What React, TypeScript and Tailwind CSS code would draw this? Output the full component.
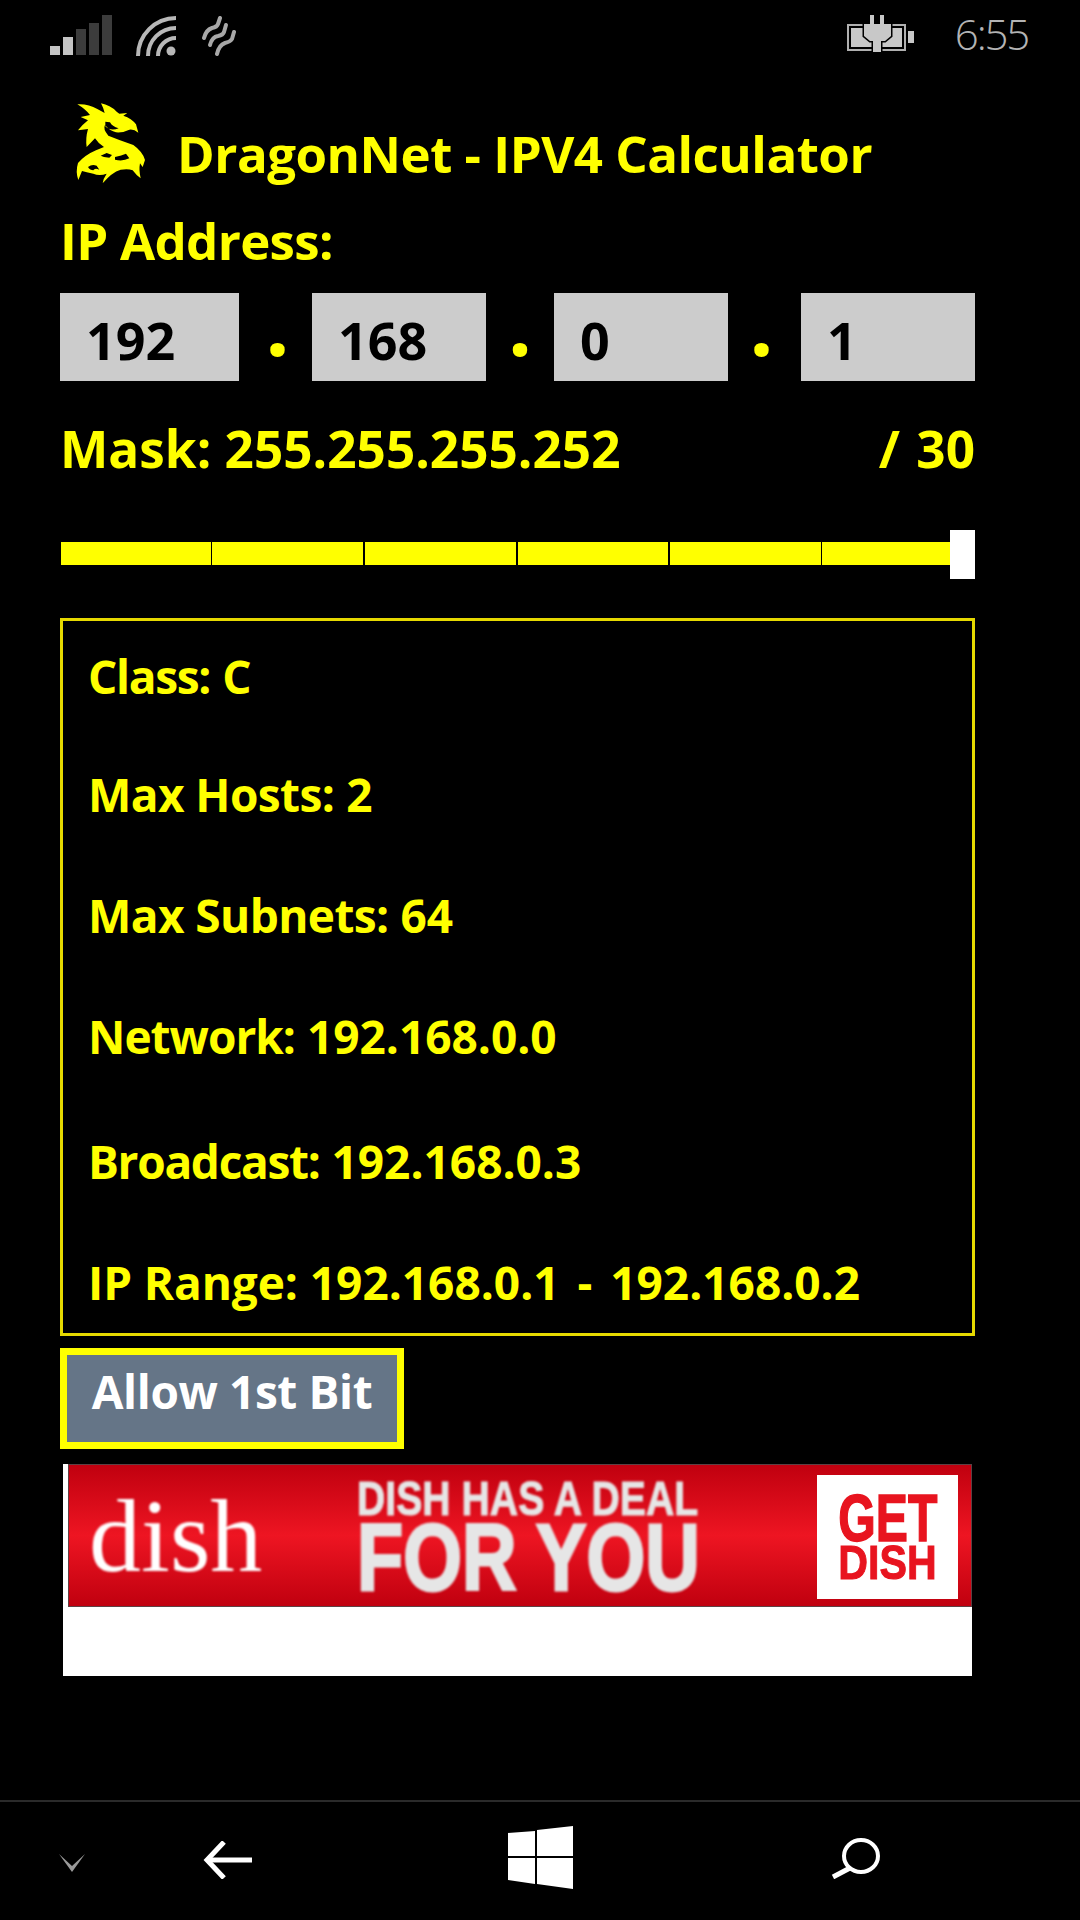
import React from 'react';

const font = { fontFamily: '"Open Sans", "Noto Sans", sans-serif' };
const banner = { fontFamily: '"Liberation Sans", Arial, sans-serif' };

function StatusBar() {
  return (
    <div className="flex h-[72px] items-start justify-between pl-[50px] pr-[52px] pt-[15px]">
      <div className="flex items-start">
        {/* signal bars */}
        <svg width="62" height="40" viewBox="0 0 62 40">
          <rect x="0" y="31" width="10" height="9" fill="#c4c4c4" />
          <rect x="13" y="22" width="10" height="18" fill="#c4c4c4" />
          <rect x="26" y="14" width="10" height="26" fill="#3c3c3c" />
          <rect x="39" y="8" width="10" height="32" fill="#3c3c3c" />
          <rect x="52" y="0" width="10" height="40" fill="#3c3c3c" />
        </svg>
        {/* wifi */}
        <svg width="40" height="40" viewBox="0 0 40 40" fill="none" stroke="#b8b8b8" strokeWidth="4" className="ml-[24px] mt-px">
          <path d="M2 40 A38 38 0 0 1 40 2" />
          <path d="M12 40 A28 28 0 0 1 40 12" />
          <path d="M22 40 A18 18 0 0 1 40 22" />
          <circle cx="35" cy="35" r="4.5" fill="#b8b8b8" stroke="none" />
        </svg>
        {/* data sense */}
        <svg width="34" height="40" viewBox="0 0 34 40" fill="none" stroke="#a8a8a8" strokeWidth="4" strokeLinecap="round" className="ml-[26px] mt-px">
          <path d="M18 2 L16 8 Q15 11 10 12 Q4 14 2 22" />
          <path d="M24 9 L22 16 Q21 19 16 20 Q10 21 8 29" />
          <path d="M32 16 L30 23 Q28 26 23 27 Q17 29 15 38" />
        </svg>
      </div>
      <div className="flex items-start">
        {/* battery, charging */}
        <svg width="67" height="37" viewBox="0 0 67 37">
          <rect x="1" y="10" width="57" height="25" fill="none" stroke="#b0b0b0" strokeWidth="2" />
          <rect x="4" y="13" width="51" height="19" fill="#c8c8c8" />
          <rect x="61" y="16" width="6" height="12" fill="#c8c8c8" />
          <path
            d="M23 0 H27 V9 H33 V0 H37 V9 H44 V21 L38 26 H34 V37 H26 V26 H23 L17 21 V9 H23 Z"
            fill="#c8c8c8"
            stroke="#000"
            strokeWidth="3"
            style={{ paintOrder: 'stroke' }}
          />
        </svg>
        <span className="ml-[41px] mt-[-9px] text-[42px] font-light leading-[56px] tracking-[-2.2px] text-[#b4b4b4]">6:55</span>
      </div>
    </div>
  );
}

function DragonLogo() {
  return (
    <svg width="100" height="95" viewBox="0 0 300 285" className="mt-[23px] shrink-0">
      <path
        fill="#ffff00"
        fillRule="evenodd"
        d="M52 28 Q85 26 112 42 L134 54 Q130 38 123 25 Q150 30 170 50 L178 56 L202 54 L190 62 Q215 70 228 88 L235 113 Q222 102 208 104 Q188 114 168 112 Q150 108 135 90 Q128 102 145 122 Q180 136 220 150 Q248 170 255 195 L248 216 L240 205 Q236 225 242 250 Q228 240 218 226 Q205 220 182 224 Q155 232 128 265 Q130 250 140 236 Q118 244 100 236 Q78 232 66 228 L55 255 Q46 230 54 204 Q75 180 108 166 L132 156 Q115 146 105 130 L80 156 Q76 130 84 102 L54 106 Q66 90 84 76 L62 66 L90 60 Q76 42 52 28 Z M136 80 L150 82 Q156 94 176 100 Q152 110 136 94 Z M84 216 Q96 206 110 212 L118 224 Q104 218 100 226 Q90 226 84 216 Z M122 182 L140 174 L156 180 L148 188 L132 186 Z M165 186 Q185 182 198 176 L208 190 Q188 200 165 194 Z"
      />
    </svg>
  );
}

function Octet({ value, width }: { value: string; width: string }) {
  return (
    <div className={`${width} flex h-[88px] items-center bg-[#cccccc] pl-[26px] pt-[6px] text-[52px] font-bold text-black`}>
      {value}
    </div>
  );
}

function Dot({ box }: { box: string }) {
  return <div className={`${box} text-center text-[84px] font-bold leading-[62px] text-[#ffff00]`}>.</div>;
}

const ticks = [
  { w: 'w-[151px]', line: 'border-r' },
  { w: 'w-[153px]', line: 'border-r-2' },
  { w: 'w-[153px]', line: 'border-r-2' },
  { w: 'w-[152px]', line: 'border-r-2' },
  { w: 'w-[152px]', line: 'border-r' },
];

function SliderBar() {
  return (
    <div className="mt-[52px] flex h-[49px] items-start pl-px">
      <div className="mt-[12px] flex h-[23px] flex-1 bg-[#ffff00]">
        {ticks.map((t, i) => (
          <div key={i} className={`${t.w} ${t.line} h-full border-black`} />
        ))}
      </div>
      <div className="h-[49px] w-[25px] bg-white" />
    </div>
  );
}

const rows = [
  { label: 'Class:', value: 'C', gap: 'mt-0', fit: 'tracking-[-1.3px]' },
  { label: 'Max Hosts:', value: '2', gap: 'mt-[62px]', fit: 'tracking-[-0.6px]' },
  { label: 'Max Subnets:', value: '64', gap: 'mt-[65px]', fit: 'tracking-[-0.6px]' },
  { label: 'Network:', value: '192.168.0.0', gap: 'mt-[65px]', fit: 'tracking-[-1px]' },
  { label: 'Broadcast:', value: '192.168.0.3', gap: 'mt-[69px]', fit: 'tracking-[-1.3px]' },
  { label: 'IP Range:', value: '192.168.0.1 - 192.168.0.2', gap: 'mt-[65px]', fit: 'tracking-[-0.1px]' },
];

function DishBanner() {
  return (
    <div className="ml-[3px] mt-[15px] h-[212px] w-[909px] bg-white pl-[5px]">
      <div className="flex h-[143px] items-start border border-[#5e4044] bg-[linear-gradient(180deg,#c0000f_0%,#ee1522_50%,#c0000f_100%)] pl-[20px]">
        <div className="mt-[16px] w-[268px] text-[104px] leading-[110px] text-white blur-[1px]" style={{ fontFamily: '"Liberation Serif", serif' }}>
          dish
        </div>
        <div className="mt-[15px] flex w-[392px] flex-col text-[#e6e6e6] blur-[1px]" style={banner}>
          <span className="origin-left scale-x-[0.8] whitespace-nowrap text-[49px] font-bold leading-[36px] [-webkit-text-stroke:1px_#e6e6e6]">DISH HAS A DEAL</span>
          <span className="mt-[3px] origin-left scale-x-[0.795] whitespace-nowrap text-[95px] font-bold leading-[76px] [-webkit-text-stroke:3px_#e6e6e6]">FOR YOU</span>
        </div>
        <div className="ml-auto mr-[13px] mt-[10px] flex h-[124px] w-[141px] flex-col items-center justify-center bg-white text-[#e8141f]" style={banner}>
          <span className="scale-x-[0.73] text-[66px] font-bold leading-[50px] blur-[0.7px] [-webkit-text-stroke:1.5px_#e8141f]">GET</span>
          <span className="scale-x-[0.84] text-[49px] font-bold leading-[38px] blur-[0.7px] [-webkit-text-stroke:1px_#e8141f]">DISH</span>
        </div>
      </div>
    </div>
  );
}

function NavBar() {
  return (
    <div className="mt-auto h-[120px] border-t-2 border-[#2a2a2a]">
      <div className="flex h-full items-center">
        <svg width="26" height="18" viewBox="0 0 26 18" className="ml-[59px] mt-[4px]">
          <path d="M0 0 L13 18 L26 0 L13 12 Z" fill="#9a9a9a" />
        </svg>
        <svg width="50" height="38" viewBox="0 0 50 38" fill="none" stroke="#fff" strokeWidth="5" className="ml-[117px] mt-[-2px]">
          <path d="M22 1 L5 19 L22 37" />
          <path d="M5 19 H50" />
        </svg>
        <svg width="65" height="63" viewBox="0 0 65 63" className="ml-[256px] mt-[-7px]">
          <path fill="#fff" d="M0 7 L27 5 V30 H0 Z M29 4 L65 0 V30 H29 Z M0 32 H27 V58 L0 54 Z M29 32 H65 V63 L29 58 Z" />
        </svg>
        <svg width="50" height="41" viewBox="0 0 50 41" fill="none" stroke="#fff" className="ml-[257px] mt-[-5px]">
          <ellipse cx="31" cy="18" rx="17" ry="16" strokeWidth="4" />
          <path d="M20 30 L3 39" strokeWidth="5" />
        </svg>
      </div>
    </div>
  );
}

export default function App() {
  return (
    <div className="flex h-[1920px] w-[1080px] flex-col overflow-hidden bg-black" style={font}>
      <StatusBar />

      <div className="pl-[60px] pr-[105px]">
        {/* Title */}
        <div className="flex h-[138px] items-start">
          <DragonLogo />
          <h1 className="ml-[17px] mt-[51px] whitespace-nowrap text-[51px] font-bold leading-[60px] tracking-[-0.5px] text-[#ffff00]">DragonNet - IPV4 Calculator</h1>
        </div>

        <div className="text-[51px] font-bold leading-[60px] tracking-[-0.7px] text-[#ffff00]">IP Address:</div>

        <div className="mt-[23px] flex items-start">
          <Octet value="192" width="w-[179px]" />
          <Dot box="w-[73px] pl-[4px]" />
          <Octet value="168" width="w-[174px]" />
          <Dot box="w-[68px]" />
          <Octet value="0" width="w-[174px]" />
          <Dot box="w-[73px] pr-[6px]" />
          <Octet value="1" width="w-[174px]" />
        </div>

        <div className="mt-[37px] flex justify-between text-[51.3px] font-bold leading-[60px] text-[#ffff00]">
          <span>Mask: 255.255.255.252</span>
          <span className="[word-spacing:3px]">/ 30</span>
        </div>

        <SliderBar />

        {/* Results */}
        <div className="mt-[39px] h-[718px] border-[3px] border-[#e6d900] pl-[25px] pt-[27px] text-[46px] font-bold leading-[56px] text-[#ffff00]">
          {rows.map((r) => (
            <div key={r.label} className={r.gap}>
              <span className={r.fit}>{r.label}</span> <span className="[word-spacing:6px]">{r.value}</span>
            </div>
          ))}
        </div>

        <button className="mt-[12px] block h-[101px] w-[344px] border-[7px] border-[#ffff00] bg-[#657587] pb-[15px] text-center text-[46px] font-bold tracking-[-0.4px] text-white">
          Allow 1st Bit
        </button>

        <DishBanner />
      </div>

      <NavBar />
    </div>
  );
}
